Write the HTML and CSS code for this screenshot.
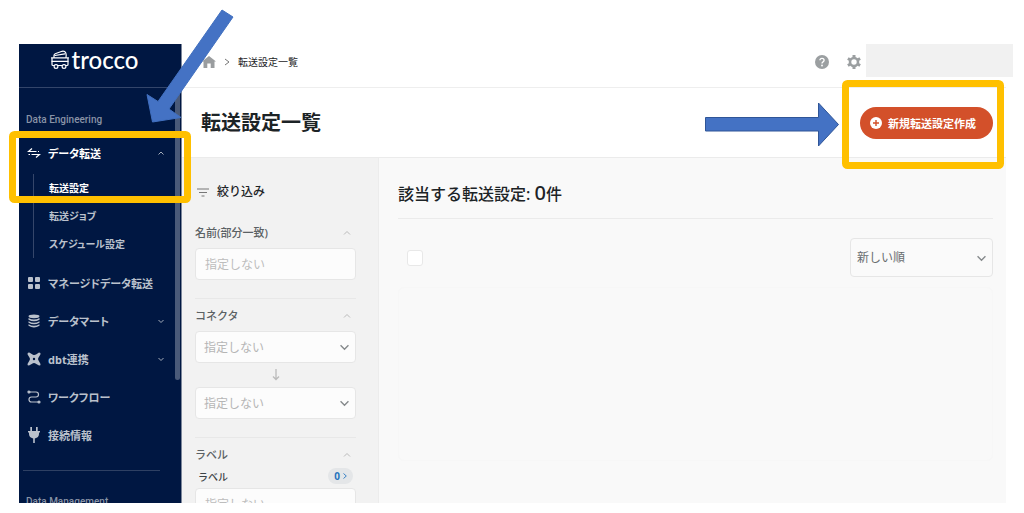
FILE: index.html
```html
<!DOCTYPE html>
<html lang="ja">

<head>
    <meta charset="UTF-8" />
    <title>転送設定一覧 | trocco</title>
    <link rel="stylesheet" href="styles.css">
</head>

<body>
    <div class="app">
        <!-- Sidebar -->
        <aside class="sidebar">
            <a href="#" class="logo">
                <svg width="20" height="20" viewBox="0 0 20 20" fill="none" stroke="#fff" stroke-width="1.2" stroke-linejoin="round" stroke-linecap="round">
                    <path d="M4 7.500 V5.500 Q4 4.300 5.200 3.700 L12 1.300 Q14.800 .8 15.800 3 Q16.500 4.800 16 7.500" />
                    <path d="M5 5.500 L14.800 3.800" />
                    <path d="M1.500 7.800 H18.500 M2 7.800 V14.500 Q2 15.500 3 15.500 H4 M18 7.800 V14.500 Q18 15.500 17 15.500 H16 M8 15.500 H12" />
                    <path d="M2 11.300 H18" />
                    <circle cx="6" cy="16.500" r="1.900" />
                    <circle cx="14" cy="16.500" r="1.900" />
                </svg>
                <span>trocco</span>
            </a>
            <div class="side-body">
                <p class="side-label">Data Engineering</p>
                <nav class="menu">
                    <a href="#" class="menu-item active">
                        <svg class="menu-icon" viewBox="0 0 14 14" fill="none" stroke="currentColor" stroke-width="1.2">
                            <path d="M5 2.5 L1.5 5.5 H9.5 M9 11.5 L12.5 8.5 H4.500 M11 5.500 H12 M1.500 8.500 H3" />
                        </svg>
                        <span>データ転送</span>
                        <svg class="caret" viewBox="0 0 8 8"><path d="M1.500 5.500 L4 3 L6.500 5.500" /></svg>
                    </a>
                    <div class="submenu">
                        <a href="#" class="active">転送設定</a>
                        <a href="#">転送ジョブ</a>
                        <a href="#">スケジュール設定</a>
                    </div>
                    <a href="#" class="menu-item">
                        <svg class="menu-icon" viewBox="0 0 14 14" fill="currentColor">
                            <rect x="1" y="1" width="5" height="5" rx="1" />
                            <rect x="8" y="1" width="5" height="5" rx="1" />
                            <rect x="1" y="8" width="5" height="5" rx="1" />
                            <rect x="8" y="8" width="5" height="5" rx="1" />
                        </svg>
                        <span>マネージドデータ転送</span>
                    </a>
                    <a href="#" class="menu-item">
                        <svg class="menu-icon" viewBox="0 0 14 14" fill="currentColor">
                            <ellipse cx="7" cy="2.300" rx="5.500" ry="1.900" />
                            <path d="M1.500 4 Q7 7 12.500 4 V5.800 Q7 8.800 1.500 5.800 Z" />
                            <path d="M1.500 7.200 Q7 10.200 12.500 7.200 V8.800 Q7 11.800 1.500 8.800 Z" />
                            <path d="M1.500 10.200 Q7 13.200 12.500 10.200 V11.800 Q7 15 1.500 11.800 Z" />
                        </svg>
                        <span>データマート</span>
                        <svg class="caret" viewBox="0 0 8 8"><path d="M1.500 3 L4 5.500 L6.500 3" /></svg>
                    </a>
                    <a href="#" class="menu-item">
                        <svg class="menu-icon" viewBox="0 0 14 14" fill="currentColor">
                            <path fill-rule="evenodd" d="M2.200 .5 L6 2.700 Q7.500 3.300 9 2.500 L12 .5 Q14 .5 13.500 2.200 L11.300 6 Q10.800 7 11.300 8 L13.500 12 Q13.800 13.700 12 13.500 L8 11.300 Q7 10.800 6 11.300 L2 13.500 Q.2 13.500 .5 12 L2.700 8 Q3.200 7 2.700 6 L.5 2.200 Q.3 .3 2.200 .5 Z M7 5.800 A1.200 1.200 0 1 0 7 8.200 A1.200 1.200 0 1 0 7 5.800 Z" />
                        </svg>
                        <span>dbt連携</span>
                        <svg class="caret" viewBox="0 0 8 8"><path d="M1.500 3 L4 5.500 L6.500 3" /></svg>
                    </a>
                    <a href="#" class="menu-item">
                        <svg class="menu-icon" viewBox="0 0 14 14" fill="none" stroke="currentColor" stroke-width="1.200">
                            <circle cx="2" cy="2" r="1" fill="currentColor" />
                            <circle cx="12" cy="12" r="1" fill="currentColor" />
                            <path d="M2 2 H9 Q11.500 2 11.500 4.500 Q11.500 7 9 7 H4.500 Q2 7 2 9.500 Q2 12 4.500 12 H12" />
                        </svg>
                        <span>ワークフロー</span>
                    </a>
                    <a href="#" class="menu-item">
                        <svg class="menu-icon tall" viewBox="0 0 14 16" fill="currentColor">
                            <path d="M3.300 0 H5 V4 H9 V0 H10.700 V4 H13 V5.500 H12 V7 Q12 10.500 7.800 11.500 V16 H6.200 V11.500 Q2 10.500 2 7 V5.500 H1 V4 H3.300 Z" />
                        </svg>
                        <span>接続情報</span>
                    </a>
                </nav>
                <p class="side-label second">Data Management</p>
            </div>
            <div class="scrollbar"></div>
        </aside>

        <!-- Main content -->
        <div class="main">
            <header class="topbar">
                <nav class="breadcrumb">
                    <svg width="14" height="12" viewBox="0 0 14 12" fill="#9a9d9f"><path d="M7 0 L14 5.500 H12.500 V12 H8.700 V7.500 H5.300 V12 H1.500 V5.500 H0 Z" /></svg>
                    <svg width="6" height="8" viewBox="0 0 6 8" fill="none" stroke="#777"><path d="M1 1 L5 4 L1 7" /></svg>
                    <span>転送設定一覧</span>
                </nav>
                <div class="tools">
                    <button class="icon-btn" aria-label="ヘルプ">
                        <svg width="14" height="14" viewBox="0 0 14 14">
                            <circle cx="7" cy="7" r="7" fill="#9b9fa1" />
                            <path d="M4.900 5.300 Q5 3.300 7 3.300 Q9.100 3.300 9.100 5.200 Q9.100 6.200 8 6.900 Q7 7.500 7 8.600" fill="none" stroke="#fff" stroke-width="1.300" />
                            <circle cx="7" cy="10.500" r=".9" fill="#fff" />
                        </svg>
                    </button>
                    <button class="icon-btn" aria-label="設定">
                        <svg width="14" height="14" viewBox="0 0 14 14" fill="none" stroke="#9b9fa1">
                            <circle cx="7" cy="7" r="4" stroke-width="2.600" />
                            <path d="M7 0 V2.500 M7 11.500 V14 M.9 3.500 L3 4.700 M11 9.300 L13.100 10.500 M.9 10.500 L3 9.300 M11 4.700 L13.100 3.500" stroke-width="3" />
                        </svg>
                    </button>
                    <div class="account"></div>
                </div>
            </header>

            <div class="title-row">
                <h1>転送設定一覧</h1>
                <button class="btn-create">
                    <svg width="12" height="12" viewBox="0 0 12 12">
                        <circle cx="6" cy="6" r="6" fill="#fff" />
                        <path d="M6 3 V9 M3 6 H9" stroke="#d3502a" stroke-width="1.400" />
                    </svg>
                    新規転送設定作成
                </button>
            </div>

            <div class="columns">
                <form class="filter">
                    <h2>
                        <svg width="12" height="9" viewBox="0 0 12 9" stroke="#777"><path d="M0 1 H12 M2 4.500 H10 M4.500 8 H7.500" /></svg>
                        絞り込み
                    </h2>
                    <section>
                        <div class="filter-head">
                            <label for="name">名前(部分一致)</label>
                            <svg class="caret" viewBox="0 0 8 8"><path d="M1 5.500 L4 2.500 L7 5.500" /></svg>
                        </div>
                        <input type="text" id="name" class="field" placeholder="指定しない" />
                    </section>
                    <section>
                        <div class="filter-head">
                            <label for="src">コネクタ</label>
                            <svg class="caret" viewBox="0 0 8 8"><path d="M1 5.500 L4 2.500 L7 5.500" /></svg>
                        </div>
                        <div class="select">
                            <select id="src" class="field"><option>指定しない</option></select>
                            <svg class="chevron" viewBox="0 0 8 6"><path d="M.5 1 L4 4.500 L7.500 1" /></svg>
                        </div>
                        <svg class="down" viewBox="0 0 8 12"><path d="M4 0 V10 M1 7.500 L4 10.500 L7 7.500" /></svg>
                        <div class="select">
                            <select id="dest" class="field" aria-label="転送先コネクタ"><option>指定しない</option></select>
                            <svg class="chevron" viewBox="0 0 8 6"><path d="M.5 1 L4 4.500 L7.500 1" /></svg>
                        </div>
                    </section>
                    <section>
                        <div class="filter-head">
                            <span>ラベル</span>
                            <svg class="caret" viewBox="0 0 8 8"><path d="M1 5.500 L4 2.500 L7 5.500" /></svg>
                        </div>
                        <div class="label-row">
                            <label for="label">ラベル</label>
                            <button type="button" class="count">0
                                <svg width="4" height="6" viewBox="0 0 4 6" fill="none" stroke="#3b82c4"><path d="M.5 .5 L3.300 3 L.5 5.500" /></svg>
                            </button>
                        </div>
                        <input type="text" id="label" class="field" placeholder="指定しない" />
                    </section>
                </form>

                <main class="content">
                    <h2>該当する転送設定: <span class="num">0</span>件</h2>
                    <div class="list-head">
                        <input type="checkbox" class="check" aria-label="すべて選択" />
                        <div class="select sort">
                            <select class="field" aria-label="並び順"><option>新しい順</option></select>
                            <svg class="chevron" viewBox="0 0 8 6"><path d="M.5 1 L4 4.500 L7.500 1" /></svg>
                        </div>
                    </div>
                    <div class="list"></div>
                </main>
            </div>
        </div>
    </div>

    <!-- Arrows and frames over the page -->
    <svg class="guide guide-left" width="240" height="210" viewBox="0 0 240 210">
        <rect x="12.500" y="134.500" width="175" height="65" rx="2" fill="none" stroke="#ffc000" stroke-width="7" />
        <path d="M222 10 L233 17 L169 109 L181 117.500 L152.500 122 L147 94.500 L158 101.500 Z" fill="#4472c4" stroke="#4170c0" />
    </svg>
    <svg class="guide guide-right" width="324" height="180" viewBox="0 0 324 180">
        <rect x="145.500" y="83.500" width="155" height="82" rx="2" fill="none" stroke="#ffc000" stroke-width="7" />
        <path d="M5.500 117.500 H118.500 V103 L138.500 124.500 L118.500 146 V131 H5.500 Z" fill="#4472c4" stroke="#2f5597" />
    </svg>
</body>

</html>
```
FILE: styles.css
```css
* {
    box-sizing: border-box;
    margin: 0;
    padding: 0;
}

body {
    position: relative;
    height: 100vh;
    padding: 44px 18px 10px 19px;
    background: #fff;
    color: #1c2326;
    font-family: "Noto Sans", "Noto Sans CJK JP", sans-serif;
    overflow: hidden;
}

a {
    color: inherit;
    text-decoration: none;
}

button,
input,
select {
    font-family: inherit;
}

svg {
    flex-shrink: 0;
}

.app {
    display: flex;
    height: 100%;
}

/* Sidebar */
.sidebar {
    position: relative;
    width: 163px;
    flex-shrink: 0;
    background: #001742;
    color: #bac1cc;
    border-right: 1px solid #7d879b;
    overflow: hidden;
}

.logo {
    display: flex;
    justify-content: center;
    gap: 2px;
    height: 44px;
    padding: 6px 12px 0 0;
    border-bottom: 1px solid #33456a;
    color: #fff;
    font: 500 24px/20px Lato, sans-serif;
}

.side-label {
    padding: 24px 7px 0;
    font-family: Roboto, sans-serif;
    font-size: 10px;
    font-weight: 500;
    line-height: 16px;
    color: #8993a6;
}

.side-label.second {
    margin: 16px 21px 0 4px;
    padding: 23px 3px 0;
    border-top: 1px solid #2e4063;
}

.menu {
    padding-top: 6px;
}

.menu-item {
    display: flex;
    align-items: center;
    gap: 7px;
    height: 38px;
    padding: 0 16px 0 8px;
    font-size: 11px;
    font-weight: 700;
    font-feature-settings: "palt";
}

.menu .active {
    color: #fff;
}

.menu-icon {
    width: 14px;
    height: 14px;
}

.menu-icon.tall {
    height: 16px;
}

.caret {
    width: 8px;
    height: 8px;
    margin-left: auto;
    fill: none;
    stroke: #a5adba;
}

.submenu {
    margin: 2px 0 6px 14px;
    border-left: 1px solid #35466a;
}

.submenu a {
    display: block;
    padding-left: 15px;
    font-size: 10px;
    font-weight: 700;
    font-feature-settings: "palt";
    line-height: 28px;
}

.scrollbar {
    position: absolute;
    top: 44px;
    right: 1px;
    width: 5px;
    height: 292px;
    border-radius: 3px;
    background: #4a5a79;
}

/* Main */
.main {
    display: flex;
    flex: 1;
    flex-direction: column;
    min-width: 0;
}

.topbar {
    display: flex;
    justify-content: space-between;
    height: 44px;
    padding-left: 20px;
    border-bottom: 1px solid #eee;
}

.breadcrumb {
    display: flex;
    align-items: center;
    gap: 8px;
    height: 35px;
    font-size: 10px;
}

.tools {
    display: flex;
    margin-right: -7px;
}

.icon-btn {
    width: 32px;
    height: 35px;
    border: none;
    background: none;
    cursor: pointer;
}

.icon-btn svg {
    display: block;
    margin: 0 auto;
}

.account {
    width: 147px;
    height: 33px;
    margin-left: -4px;
    background: #f1f1f1;
}

.title-row {
    display: flex;
    align-items: center;
    justify-content: space-between;
    height: 70px;
    padding: 0 13px 0 19px;
    border-bottom: 1px solid #ebebeb;
}

h1 {
    font-size: 20px;
    line-height: 32px;
}

.btn-create {
    display: flex;
    align-items: center;
    gap: 6px;
    height: 32px;
    padding: 0 17px 0 10px;
    border: none;
    border-radius: 16px;
    background: #d3502a;
    color: #fff;
    font-size: 11px;
    font-weight: 700;
    cursor: pointer;
}

.columns {
    display: flex;
    flex: 1;
    min-height: 0;
    overflow: hidden;
}

/* Filter */
.filter {
    width: 197px;
    flex-shrink: 0;
    padding: 24px 22px 0 13px;
    background: #f2f2f2;
    border-right: 1px solid #ececec;
}

.filter h2 {
    display: flex;
    align-items: center;
    gap: 8px;
    padding-left: 2px;
    font-size: 12px;
    font-weight: 500;
    line-height: 20px;
}

.filter section {
    padding: 7px 0 18px;
    border-bottom: 1px solid #e8e8e8;
}

.filter h2 + section {
    padding-top: 21px;
}

.filter-head {
    display: flex;
    align-items: center;
    margin-bottom: 5px;
    padding-right: 5px;
    color: #5b6164;
    font-size: 11px;
    font-weight: 500;
    line-height: 20px;
}

.filter .caret {
    stroke: #bbb;
}

.field {
    display: block;
    width: 100%;
    height: 32px;
    padding: 0 9px;
    border: 1px solid #e6e6e6;
    border-radius: 4px;
    background: #fcfcfc;
    color: #b5b5b5;
    font-size: 12px;
    appearance: none;
}

.field::placeholder {
    color: #bdbdbd;
}

.select {
    position: relative;
}

.select .field {
    padding: 0 8px;
}

.chevron {
    position: absolute;
    top: 50%;
    right: 7px;
    width: 9px;
    height: 7px;
    margin-top: -3px;
    fill: none;
    stroke: #85898b;
    stroke-width: 1.2;
    pointer-events: none;
}

.down {
    display: block;
    width: 8px;
    height: 12px;
    margin: 6px auto;
    fill: none;
    stroke: #bbb;
    stroke-width: 1.3;
}

.label-row {
    display: flex;
    align-items: center;
    justify-content: space-between;
    margin: -2px 3px 4px;
    color: #3d4346;
    font-size: 10px;
    font-weight: 500;
}

.count {
    display: flex;
    align-items: center;
    gap: 3px;
    height: 16px;
    padding: 0 6px;
    border: none;
    border-radius: 8px;
    background: #e4e6e8;
    color: #2673bd;
    font-size: 10px;
    font-weight: 700;
}

/* List */
.content {
    display: flex;
    flex: 1;
    flex-direction: column;
    padding: 22px 13px 42px 19px;
    background: #f9f9f9;
}

.content h2 {
    padding-bottom: 10px;
    border-bottom: 1px solid #ebebeb;
    font-size: 16px;
    font-weight: 500;
    line-height: 28px;
}

.num {
    font-size: 20px;
    line-height: 20px;
}

.list-head {
    display: flex;
    align-items: center;
    justify-content: space-between;
    padding: 19px 0 10px 9px;
}

.check {
    width: 16px;
    height: 16px;
    border: 1px solid #e8e8e8;
    border-radius: 3px;
    background: #fff;
    appearance: none;
}

.sort {
    width: 143px;
}

.sort .field {
    height: 39px;
    padding: 0 6px;
    background: #fafafa;
    color: #686d70;
}

.list {
    flex: 1;
    border: 1px solid #f7f7f7;
    border-radius: 6px;
}

/* Guides */
.guide {
    position: absolute;
    top: 0;
    pointer-events: none;
}

.guide-left {
    left: 0;
}

.guide-right {
    right: 0;
}
```
